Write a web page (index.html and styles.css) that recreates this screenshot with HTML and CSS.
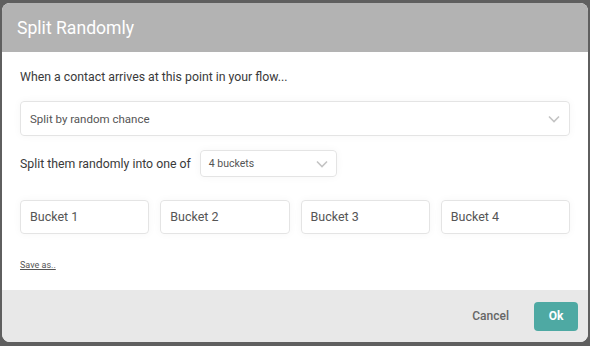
FILE: index.html
```html
<!DOCTYPE html>
<html lang="en">

<head>
    <meta charset="UTF-8">
    <title>Split Randomly</title>
    <link rel="stylesheet" href="styles.css">
</head>

<body>
    <div class="modal">
        <div class="modal-header">Split Randomly</div>
        <div class="modal-body">
            <p class="intro">When a contact arrives at this point in your flow...</p>
            <div class="select select-wide">
                <span>Split by random chance</span>
                <svg class="chevron" width="12" height="8" viewBox="0 0 12 8"><path d="M1 1.5l5 5 5-5" fill="none" stroke="#c4c4c4" stroke-width="1.6"/></svg>
            </div>
            <div class="split-row">
                <span>Split them randomly into one of</span>
                <div class="select select-small">
                    <span>4 buckets</span>
                    <svg class="chevron" width="12" height="8" viewBox="0 0 12 8"><path d="M1 1.5l5 5 5-5" fill="none" stroke="#c4c4c4" stroke-width="1.6"/></svg>
                </div>
            </div>
            <div class="buckets">
                <div class="bucket">Bucket 1</div>
                <div class="bucket">Bucket 2</div>
                <div class="bucket">Bucket 3</div>
                <div class="bucket">Bucket 4</div>
            </div>
            <a href="#" class="save-as">Save as..</a>
        </div>
        <div class="modal-footer">
            <button type="button" class="btn-cancel">Cancel</button>
            <button type="button" class="btn-ok">Ok</button>
        </div>
    </div>
</body>

</html>
```

FILE: styles.css
```css
body {
    margin: 0;
    height: 346px;
    overflow: hidden;
    background-color: #5f5f5f;
    font-family: Roboto, "Liberation Sans", sans-serif;
    padding: 3px 2px 0 2px;
    box-sizing: border-box;
}

.modal {
    width: 586px;
    height: 339px;
    border-radius: 8px;
    overflow: hidden;
    background-color: white;
    display: flex;
    flex-direction: column;
}

.modal-header {
    background-color: #b3b3b3;
    color: white;
    font-size: 17.6px;
    height: 49px;
    line-height: 50px;
    padding-left: 15px;
    flex-shrink: 0;
}

.modal-body {
    flex: 1;
    padding: 0 18px;
    color: #3a3a3a;
}

.intro {
    margin: 16px 0 0 0;
    font-size: 12.3px;
    line-height: 18px;
}

.select {
    display: flex;
    align-items: center;
    justify-content: space-between;
    box-sizing: border-box;
    border: 1px solid #e4e4e4;
    border-radius: 4px;
    box-shadow: 0 0 8px rgba(0, 0, 0, 0.04);
    color: #555;
}

.select-wide {
    margin-top: 15px;
    height: 35px;
    padding: 0 9px 0 9px;
    font-size: 11.5px;
}

.split-row {
    display: flex;
    align-items: center;
    gap: 9px;
    margin-top: 14px;
    font-size: 12.3px;
}

.select-small {
    width: 137px;
    height: 27px;
    padding: 0 8px 0 8px;
    font-size: 10.5px;
}

.buckets {
    display: grid;
    grid-template-columns: repeat(4, 1fr);
    gap: 11px;
    margin-top: 23px;
}

.bucket {
    height: 34px;
    line-height: 32px;
    box-sizing: border-box;
    border: 1px solid #e4e4e4;
    border-radius: 4px;
    padding-left: 9px;
    font-size: 12.5px;
    color: #555;
    box-shadow: 0 0 8px rgba(0, 0, 0, 0.04);
}

.save-as {
    display: inline-block;
    margin-top: 26px;
    font-size: 9px;
    color: #555;
}

.modal-footer {
    background-color: #e8e8e8;
    height: 52px;
    flex-shrink: 0;
    display: flex;
    align-items: center;
    justify-content: flex-end;
    gap: 13px;
    padding-right: 10px;
}

.btn-cancel {
    border: none;
    background: none;
    font-family: inherit;
    font-size: 12px;
    font-weight: 500;
    color: #666;
    padding: 0 12px;
}

.btn-ok {
    border: none;
    background-color: #4ea9a3;
    color: white;
    font-family: inherit;
    font-size: 12px;
    font-weight: 700;
    width: 44px;
    height: 29px;
    border-radius: 4px;
}
```
